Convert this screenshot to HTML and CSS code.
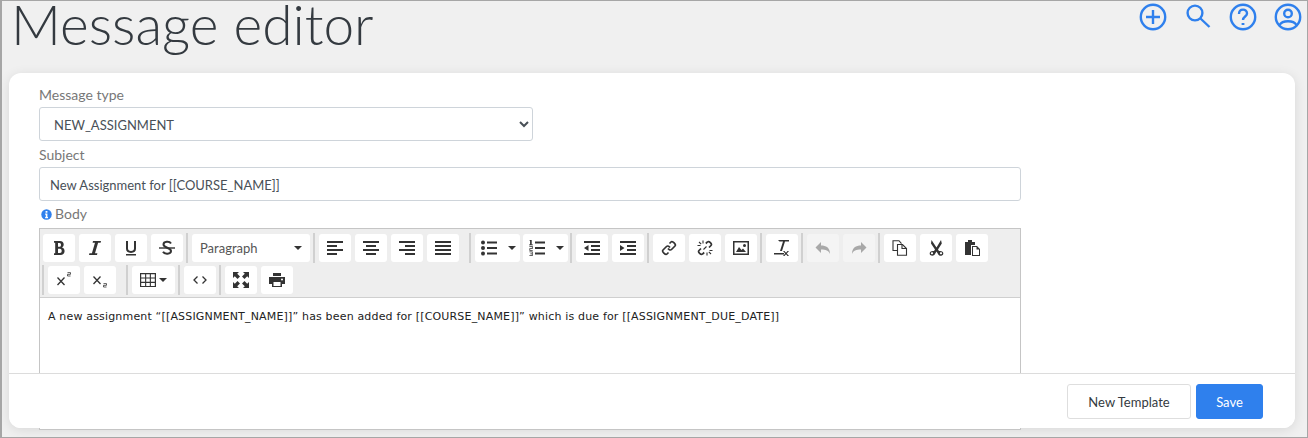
FILE: index.html
```html
<!DOCTYPE html>
<html lang="en">
<head>
<meta charset="utf-8">
<title>Message editor</title>
<link rel="stylesheet" href="styles.css">
</head>
<body>
<div class="frame">
  <header class="head">
    <h1 class="title">Message editor</h1>
    <nav class="actions">
      <svg class="top-icon" viewBox="0 0 28 28"><circle cx="14" cy="14" r="12.2"/><path d="M14 7v14M7 14h14"/></svg>
      <svg class="top-icon" viewBox="0 0 28 28"><circle cx="11" cy="10" r="7.4"/><path d="M16.5 15.5l9 8.5"/></svg>
      <svg class="top-icon" viewBox="0 0 28 28"><circle cx="14" cy="14" r="12.2"/><path d="M10 11c0-6 8.200-5.500 8 -.5 0 3-4 3-4 6.500"/><path class="dot" d="M14 20v2"/></svg>
      <svg class="top-icon" viewBox="0 0 28 28"><circle cx="14" cy="14" r="12.2"/><circle cx="14" cy="10.500" r="3.800"/><path d="M5.500 22c3-5 14-5 17 0"/></svg>
    </nav>
  </header>

  <main class="card">
    <label class="label" for="type">Message type</label>
    <select class="select" id="type"><option>NEW_ASSIGNMENT</option></select>
    <label class="label" for="subject">Subject</label>
    <input class="input" id="subject" value="New Assignment for [[COURSE_NAME]]">
    <div class="label body-label">
      <svg class="info" viewBox="0 0 12 12"><circle cx="6" cy="6" r="5.700"/><path d="M5 2.300h2v1.700H5zM4.500 5h2.500v3.700h.7V10H4.500V8.700H5.200V6.200H4.500z" fill="#fff"/></svg>
      <span>Body</span>
    </div>

    <section class="editor">
      <div class="toolbar">
        <div class="row">
          <button class="btn"><svg viewBox="0 0 16 16"><path class="f" d="M3 1h6c4.300 0 4.800 5.200 2 6.500 3.800 1 3.500 7.500-1.500 7.500H3v-1.800h1.200V2.800H3zM7 3v3.800h1.500c2 0 2-3.800 0-3.800zM7 8.700V13h2c2.300 0 2.300-4.300 0-4.300z"/></svg></button>
          <button class="btn"><svg viewBox="0 0 16 16"><path class="f" d="M6 1h8l-.4 1.700h-2.500L8 13.300h2.400L10 15H2l.4-1.700h2.500L8 2.700H5.600z"/></svg></button>
          <button class="btn"><svg viewBox="0 0 16 16"><path class="s" d="M4 1v7.500c0 4.500 8 4.500 8 0V1"/><path class="f" d="M3 14h10v1.500H3z"/></svg></button>
          <button class="btn"><svg viewBox="0 0 16 16"><path class="s" d="M12 3.500c-1.500-2.500-7.500-2.200-7.500 1 0 3.500 7.500 3 7.500 6.500 0 3.300-6.500 3.500-8 .8"/><path class="f" d="M0 7.300h16v1.400H0z"/></svg></button>
          <i class="sep"></i>
          <button class="btn combo"><span>Paragraph</span><b class="caret"></b></button>
          <i class="sep"></i>
          <button class="btn"><svg viewBox="0 0 16 16"><path class="f" d="M0 1h16v2H0zM0 5h10v2H0zM0 9h16v2H0zM0 13h10v2H0z"/></svg></button>
          <button class="btn"><svg viewBox="0 0 16 16"><path class="f" d="M0 1h16v2H0zM3 5h10v2H3zM0 9h16v2H0zM3 13h10v2H3z"/></svg></button>
          <button class="btn"><svg viewBox="0 0 16 16"><path class="f" d="M0 1h16v2H0zM6 5h10v2H6zM0 9h16v2H0zM6 13h10v2H6z"/></svg></button>
          <button class="btn"><svg viewBox="0 0 16 16"><path class="f" d="M0 1h16v2H0zM0 5h16v2H0zM0 9h16v2H0zM0 13h16v2H0z"/></svg></button>
          <i class="sep wide"></i>
          <div class="split">
            <button class="btn main"><svg viewBox="0 0 16 16"><path class="f" d="M6 1.500h10v2H6zM6 7h10v2H6zM6 12.500h10v2H6z"/><circle class="f" cx="2" cy="2.500" r="2"/><circle class="f" cx="2" cy="8" r="2"/><circle class="f" cx="2" cy="13.500" r="2"/></svg></button>
            <button class="btn arrow"><b class="caret"></b></button>
          </div>
          <div class="split next">
            <button class="btn main"><svg viewBox="0 0 16 16"><path class="f" d="M6 1.500h10v2H6zM6 7h10v2H6zM6 12.500h10v2H6z"/><path class="f" d="M1 0h1.700v4.500H4V5.200H0V4.500h1.100V1H.4zM.4 6h3.300v3H1.200v1h2.500v.8H.4V8.200h2.500v-1.400H.4zM.4 11.500h3.300V16H.4v-.8h2.500v-1H1.300v-.7h1.600v-1.200H.4z"/></svg></button>
            <button class="btn arrow"><b class="caret"></b></button>
          </div>
          <i class="sep tight"></i>
          <button class="btn"><svg viewBox="0 0 16 16"><path class="f" d="M0 1h16v2H0zM7 5h9v2H7zM7 9h9v2H7zM0 13h16v2H0zM4.500 5v6L0 8z"/></svg></button>
          <button class="btn"><svg viewBox="0 0 16 16"><path class="f" d="M0 1h16v2H0zM7 5h9v2H7zM7 9h9v2H7zM0 13h16v2H0zM0 5v6l4.500-3z"/></svg></button>
          <i class="sep"></i>
          <button class="btn"><svg viewBox="0 0 16 16"><path class="s thin" d="M8.500 3.500l1.500-1.500c1.500-1.500 5.500 2.500 4 4l-3.500 3.500c-1.300 1.300-3-.3-3.500-1M7.500 12.500L6 14c-1.500 1.500-5.500-2.500-4-4l3.500-3.500c1.300-1.300 3 .3 3.500 1"/></svg></button>
          <button class="btn"><svg viewBox="0 0 16 16"><path class="s thin" d="M8.800 3.500L10.500 2c1.500-1.500 5 2 3.500 3.500L12 7.500M7.200 12.500L5.500 14c-1.500 1.500-5-2-3.500-3.500L4 8.500"/><path class="s one" d="M6 .5v3M10 12.500v3M.5 5.500h3M12.500 10.500h3M2 2l2.200 2.200M11.800 11.800L14 14M9.500 6.500l-3 3"/></svg></button>
          <button class="btn"><svg viewBox="0 0 16 16"><path class="f" d="M0 1h16v14H0zM1.500 2.500v11h13v-11zM3 12l3-5 2.500 3 1.500-1.500 3 3.500zM11.500 4a1.500 1.500 0 110 3 1.500 1.500 0 010-3z" fill-rule="evenodd"/></svg></button>
          <i class="sep"></i>
          <button class="btn"><svg viewBox="0 0 16 16"><path class="f" d="M4 0h11v1.500h-4L8 11H6l3-9.500H5.500zM0 13h10v1.500H0zM10.500 11l1.500 1.700L13.500 11H15l-2.200 2.500L15 16h-1.500L12 14.300 10.500 16H9l2.200-2.500L9 11z"/></svg></button>
          <i class="sep"></i>
          <button class="btn off"><svg viewBox="0 0 16 16"><path class="f" d="M6 2v3.500c5 0 9 2 9 8.500-1.500-3.500-4-4.500-9-4.500V13L.5 7.500z"/></svg></button>
          <button class="btn off"><svg viewBox="0 0 16 16"><path class="f" d="M10 2v3.500c-5 0-9 2-9 8.500 1.500-3.500 4-4.500 9-4.500V13l5.500-5.500z"/></svg></button>
          <i class="sep"></i>
          <button class="btn"><svg viewBox="0 0 16 16"><path class="s one" d="M5.500 10.500H1V.7h6l2.500 3"/><path class="s one" d="M5.500 4.500h5l4 4v6.800h-9z"/><path class="s one" d="M10 4.500v4h4.500"/></svg></button>
          <button class="btn"><svg viewBox="0 0 16 16"><path class="f" d="M3.500 0l5 7.500L13 0l.8 3.500L10 9.500l1 1.500c3-.5 4.500 1 4.300 2.800-.3 2.500-4.500 2.800-5.300.3L8.500 11.500 7 14c-1 2.500-5 2.200-5.300-.3C1.500 12 3 10.500 6 11l1-1.500L3 3.500zM4 12.300c-1.500 0-1.500 2 0 2s1.500-2 0-2zM13 12.300c-1.500 0-1.500 2 0 2s1.500-2 0-2z" fill-rule="evenodd"/></svg></button>
          <button class="btn"><svg viewBox="0 0 16 16"><path class="f" d="M4 0h4v2h3v3H7v10H1V2h3zM8 6h5l3 3v7H8zM9 7v8h6v-5.500h-2.500V7z" fill-rule="evenodd"/></svg></button>
        </div>
        <div class="row second">
          <i class="sep first"></i>
          <button class="btn"><svg viewBox="0 0 16 16"><path class="s one2" d="M1.500 5.500l7 7.500M8.500 5.500L1.500 13"/><path class="s fine" d="M11.500.6h3v1.700h-3V4h3"/></svg></button>
          <button class="btn"><svg viewBox="0 0 16 16"><path class="s one2" d="M1.500 4.500l7 7.500M8.500 4.500L1.500 12"/><path class="s fine" d="M11.500 11.600h3v1.700h-3V15h3"/></svg></button>
          <i class="sep wide"></i>
          <button class="btn table"><svg viewBox="0 0 16 16"><path class="f" d="M0 1h16v14H0zM1.200 2.200v3.200h3.900V2.200zM6.200 2.200v3.200h3.600V2.200zM10.900 2.200v3.200h3.900V2.200zM1.200 6.500v3.300h3.900V6.500zM6.200 6.500v3.300h3.600V6.500zM10.900 6.500v3.300h3.900V6.500zM1.200 10.900v3h3.900v-3zM6.200 10.900v3h3.600v-3zM10.900 10.900v3h3.900v-3z" fill-rule="evenodd"/></svg><b class="caret"></b></button>
          <i class="sep"></i>
          <button class="btn"><svg viewBox="0 0 16 16"><path class="s one2" d="M5.500 4.500L2 8l3.500 3.500M10.500 4.500L14 8l-3.500 3.500"/></svg></button>
          <i class="sep"></i>
          <button class="btn"><svg viewBox="0 0 16 16"><path class="f" d="M0 0h6L4.200 1.800 7 4.500 4.500 7 1.800 4.200 0 6zM16 0v6l-1.800-1.800L11.500 7 9 4.500l2.800-2.700L10 0zM0 16v-6l1.800 1.800L4.500 9 7 11.500l-2.800 2.700L6 16zM16 16h-6l1.800-1.800L9 11.500 11.500 9l2.700 2.800L16 10z"/></svg></button>
          <button class="btn"><svg viewBox="0 0 16 16"><path class="f" d="M4 1h8v3H4zM0 5h16v7h-3v3H3v-3H0zM4.500 10v4h7v-4zM13 6.500a1 1 0 100 2 1 1 0 000-2z" fill-rule="evenodd"/></svg></button>
        </div>
      </div>
      <div class="content">A new assignment “[[ASSIGNMENT_NAME]]” has been added for [[COURSE_NAME]]” which is due for [[ASSIGNMENT_DUE_DATE]]</div>
    </section>

    <footer class="foot">
      <button class="foot-btn">New Template</button>
      <button class="foot-btn primary">Save</button>
    </footer>
  </main>
</div>
</body>
</html>
```

FILE: styles.css
```css
* { box-sizing: border-box; }
html, body { margin: 0; height: 100%; }
body { font-family: Lato, "Liberation Sans", sans-serif; background: #f0f0f0; overflow: hidden; }

.frame {
  height: 438px;
  border: 1px solid #a6a6a6;
  border-left-width: 2px;
  overflow: hidden;
  padding: 0 12px 0 7px;
}

.head { display: flex; justify-content: space-between; height: 72px; }
.title {
  margin: 0 0 0 2px;
  font-size: 55px;
  line-height: 46px;
  font-weight: 300;
  color: #343a40;
}
.actions { display: flex; gap: 17px; margin: 2px -7px 0 0; align-items: flex-start; }
.top-icon { width: 28px; height: 28px; fill: none; stroke: #2f80ed; stroke-width: 2.400; }
.top-icon .dot { stroke-width: 2.800; }

.card {
  position: relative;
  height: 355px;
  background: #fff;
  border-radius: 12px;
  padding: 13px 30px 0;
  box-shadow: 0 2px 12px rgba(0, 0, 0, .1);
}

.label { display: block; font-size: 14px; line-height: 18px; color: #777; }
.body-label { display: flex; align-items: center; gap: 3px; margin-left: 2px; margin-top: 4px; }
.info { width: 11px; height: 11px; fill: #2f80ed; }

.select, .input {
  display: block;
  height: 34px;
  border: 1px solid #ced4da;
  border-radius: 3px;
  background: #fff;
  color: #495057;
  font: 13px Lato, sans-serif;
}
.select { width: 494px; padding: 2px 10px 0; margin: 3px 0 5px; }
.input { width: 982px; padding: 2px 10px 0; margin: 3px 0 4px; }

.editor {
  width: 982px;
  height: 202px;
  margin-top: 5px;
  border: 1px solid #c5c5c5;
  background: #fff;
}
.toolbar { background: #eee; border-bottom: 1px solid #cfcfcf; height: 69px; padding: 5px 3px 0; }
.row { display: flex; align-items: center; gap: 4px; height: 28px; }
.second { margin-top: 4px; }

.btn {
  flex: none;
  width: 32px;
  height: 28px;
  padding: 0;
  border: 0;
  border-radius: 3px;
  background: #fff;
  display: flex;
  align-items: center;
  justify-content: center;
}
.btn svg { width: 16px; height: 16px; display: block; }
.f { fill: #333; }
.s { fill: none; stroke: #333; stroke-width: 2; }
.s.thin { stroke-width: 1.700; }
.s.one { stroke-width: 1.100; }
.s.one2 { stroke-width: 1.300; }
.s.fine { stroke-width: .8; }
.off { background: #f4f4f4; }
.off .f { fill: #a8a8a8; }

.sep { flex: none; width: 2px; height: 30px; background: #d0d0d0; margin: 0 0 0 -1px; }
.sep.wide { margin-left: 6px; }
.sep.tight { margin-left: -2px; }
.sep.first { margin-left: -1px; }

.caret { width: 0; height: 0; border: 4px solid transparent; border-top-color: #333; border-bottom: 0; display: block; }

.combo {
  width: 118px;
  justify-content: space-between;
  padding: 0 8px;
  font: 13px Lato, sans-serif;
  color: #555;
}
.split { display: flex; }
.split.next { margin-left: -1px; }
.split .main { width: 28px; border-radius: 3px 0 0 3px; }
.split .arrow { width: 17px; border-radius: 0 3px 3px 0; }
.table { width: 43px; gap: 3px; }

.content {
  padding: 12px 8px;
  font: 11px/14px "DejaVu Sans", sans-serif;
  letter-spacing: .17px;
  color: #222;
  white-space: nowrap;
}

.foot {
  position: absolute;
  left: 0;
  right: 0;
  bottom: 0;
  height: 55px;
  background: #fff;
  border-top: 1px solid #dcdcdc;
  border-radius: 0 0 12px 12px;
  display: flex;
  justify-content: flex-end;
  align-items: flex-start;
  gap: 5px;
  padding: 10px 32px 0 0;
}
.foot-btn {
  height: 35px;
  padding: 0;
  width: 124px;
  border: 1px solid #dedede;
  border-radius: 3px;
  background: #fff;
  color: #343a40;
  font: 13px Lato, sans-serif;
}
.primary { width: 67px; background: #2f80ed; border-color: #2f80ed; color: #fff; }
```
